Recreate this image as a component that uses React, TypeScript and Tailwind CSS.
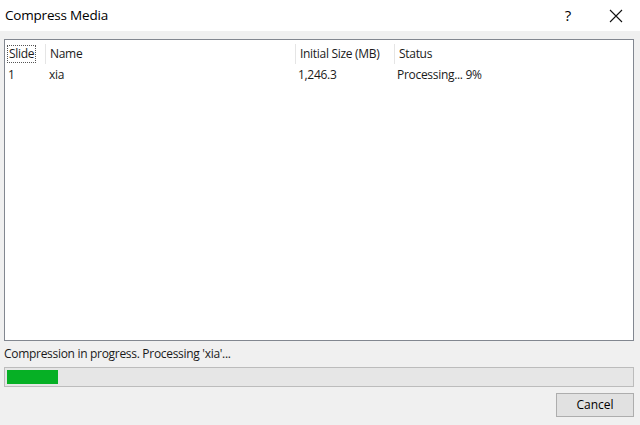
const columns = [
  { label: 'Slide', width: 'w-[40px]' },
  { label: 'Name', width: 'w-[250px]' },
  { label: 'Initial Size (MB)', width: 'w-[99px]' },
  { label: 'Status', width: 'flex-1' },
];

const rows = [{ slide: '1', name: 'xia', size: '1,246.3', status: 'Processing... 9%' }];

export default function App() {
  return (
    <div className="w-[640px] h-[425px] bg-[#f0f0f0] flex flex-col text-[#1a1a1a] font-['Open_Sans',sans-serif] overflow-hidden">
      <div className="h-[31px] bg-white flex items-center shrink-0">
        <span className="pl-[5px] text-[13.5px] text-black tracking-[-0.2px]">Compress Media</span>
        <div className="ml-auto flex items-center h-full">
          <span className="w-[48px] text-center text-[15px] text-black">?</span>
          <span className="w-[48px] flex justify-center">
            <svg width="14" height="14" viewBox="0 0 14 14" stroke="#111" strokeWidth="1.1" fill="none">
              <path d="M1 1 L13 13 M13 1 L1 13" />
            </svg>
          </span>
        </div>
      </div>

      <div className="mt-[8px] mx-[4px] mr-[6px] h-[302px] bg-white border border-[#828790] flex flex-col shrink-0">
        <div className="flex h-[24px] pt-[4px] text-[12px] tracking-[-0.3px]">
          {columns.map((col, i) => (
            <div key={col.label} className={`${col.width} flex items-center ${i > 0 ? 'border-l border-[#e5e5e5]' : ''}`}>
              {i === 0 ? (
                <span className="ml-[2px] px-[1px] h-[18px] flex items-center border border-dotted border-[#555]">
                  {col.label}
                </span>
              ) : (
                <span className="pl-[4px]">{col.label}</span>
              )}
            </div>
          ))}
        </div>
        {rows.map((row) => (
          <div key={row.slide} className="flex h-[21px] pt-[1px] items-center text-[12px] tracking-[-0.3px]">
            <span className="w-[40px] pl-[3px]">{row.slide}</span>
            <span className="w-[250px] pl-[4px]">{row.name}</span>
            <span className="w-[99px] pl-[3px]">{row.size}</span>
            <span className="flex-1 pl-[3px]">{row.status}</span>
          </div>
        ))}
      </div>

      <div className="h-[26px] pl-[4px] flex items-center text-[12px] tracking-[-0.3px] shrink-0">
        Compression in progress. Processing 'xia'...
      </div>

      <div className="mx-[4px] mr-[6px] h-[20px] bg-[#e6e6e6] border border-[#bcbcbc] p-[2px] shrink-0">
        <div className="h-full w-[51px] bg-[#06b025]" />
      </div>

      <div className="flex justify-end mt-[6px] mr-[6px]">
        <button className="w-[78px] h-[24px] bg-[#e1e1e1] border border-[#adadad] text-[12px] text-black">
          Cancel
        </button>
      </div>
    </div>
  );
}
